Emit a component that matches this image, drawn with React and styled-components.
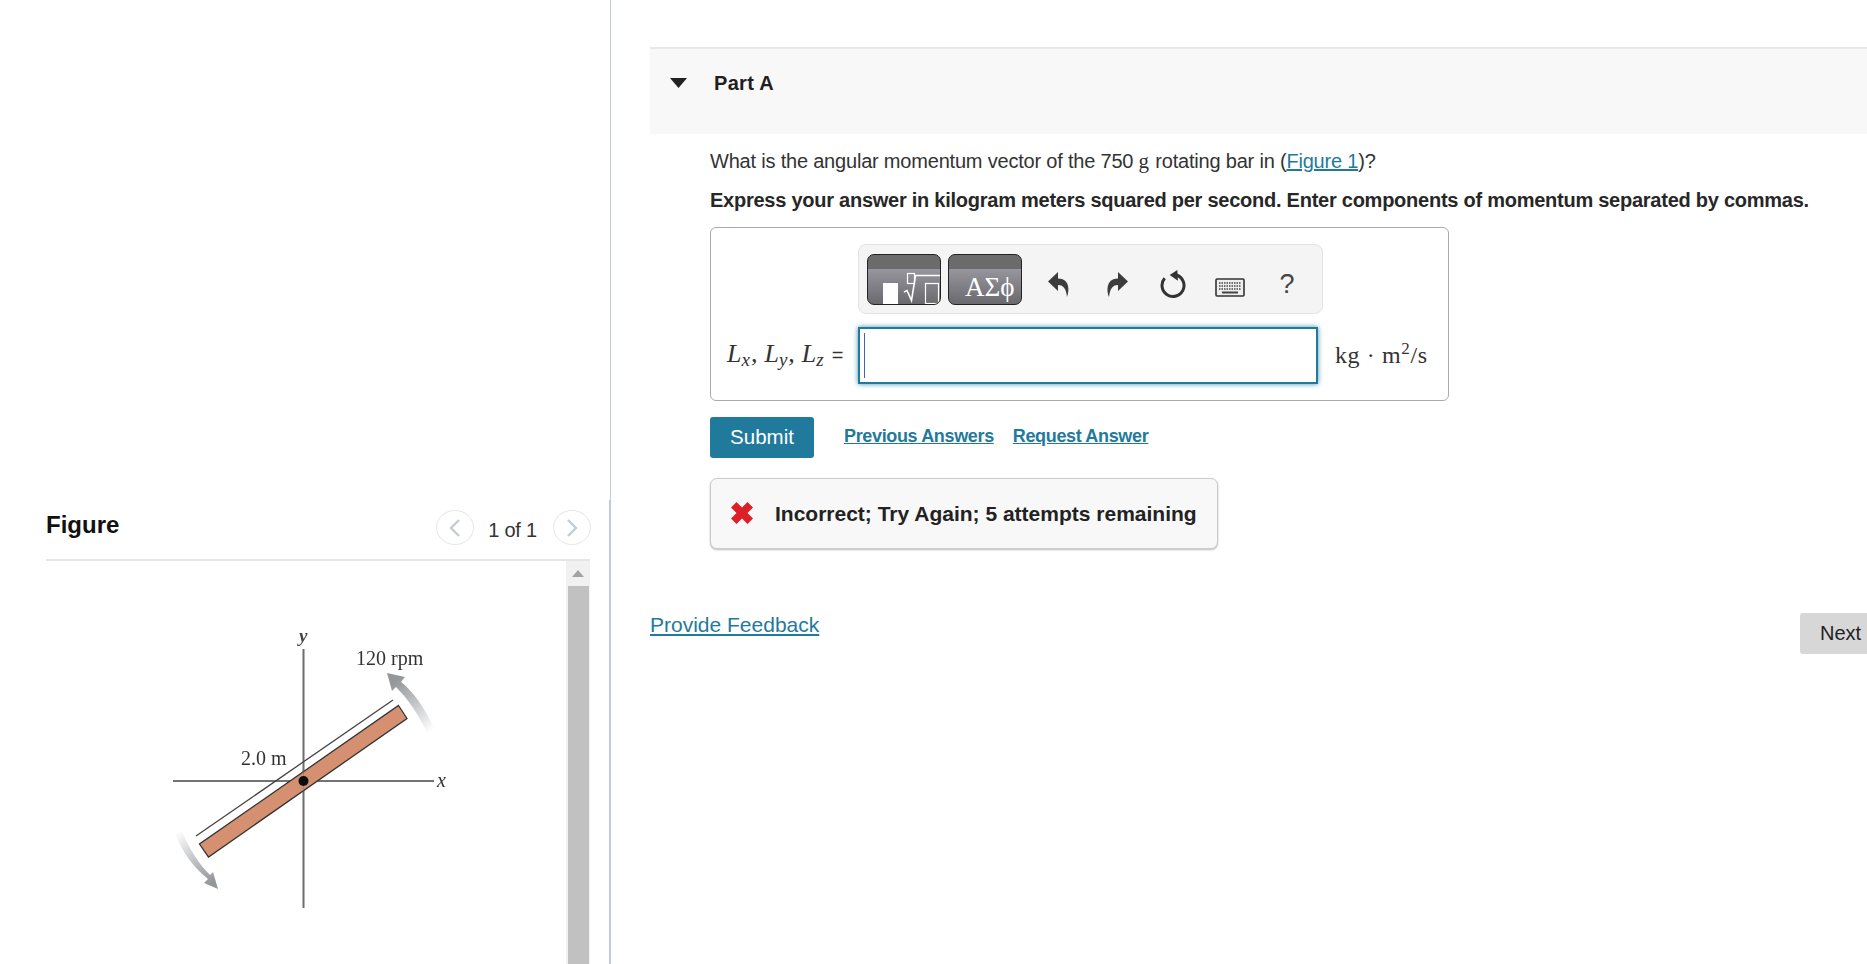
import React from "react";
import styled, { createGlobalStyle } from "styled-components";

const Global = createGlobalStyle`
  html, body { margin: 0; padding: 0; background: #fff; overflow: hidden; }
  body { font-family: "Liberation Sans", Arial, sans-serif; color: #272727; }
  * { box-sizing: border-box; }
`;
const Page = styled.div`display: flex; width: 1867px; height: 964px; overflow: hidden;`;
const LeftPane = styled.aside`
  width: 611px; flex: none; height: 964px; display: flex; flex-direction: column;
  padding: 500px 20px 0 46px; border-right: 1px solid #bccbdd; position: relative;
  &::after { content: ""; position: absolute; right: 0; top: 500px; bottom: 0; width: 1px; background: #bccbdd; }
`;
const FigHeader = styled.header`
  height: 61px; flex: none; display: flex; align-items: flex-start; justify-content: space-between;
  border-bottom: 2px solid #e5e5e5; padding-top: 9px;
`;
const FigTitle = styled.h2`margin: 0; font-size: 24px; line-height: 32px; font-weight: 700; color: #111;`;
const Pager = styled.div`display: flex; align-items: center; gap: 14px; margin-right: -1px; padding-top: 1px;`;
const RoundBtn = styled.button`
  width: 38px; height: 35px; border-radius: 50%; border: 1px solid #e8e8e8; background: #fff; padding: 0;
  display: flex; align-items: center; justify-content: center;
`;
const PagerText = styled.span`font-size: 20px; color: #333; margin: 6px 2px 0 0; letter-spacing: -0.2px;`;
const FigBody = styled.div`flex: 1; display: flex; min-height: 0;`;
const FigCanvas = styled.div`flex: 1; padding: 60px 0 0 104px;`;
const Scrollbar = styled.div`width: 24px; flex: none; background: #f1f1f1; display: flex; flex-direction: column; align-items: center;`;
const ScrollUp = styled.div`height: 25px; width: 100%; flex: none; display: flex; align-items: center; justify-content: center;`;
const ScrollThumb = styled.div`width: 21px; flex: 1; background: #c1c1c1;`;
const Diagram = styled.svg`display: block; width: 320px; height: 300px;`;

const RightPane = styled.main`flex: 1; min-width: 0; padding: 47px 0 0 39px; position: relative;`;
const PartHeader = styled.div`
  height: 87px; background: #f8f8f8; border-top: 2px solid #e8e8e8; display: flex; align-items: flex-start; padding: 20px 0 0 20px;
`;
const PartCaret = styled.svg`width: 17px; height: 10px; margin-top: 9px; flex: none;`;
const PartTitle = styled.h3`margin: 0 0 0 27px; font-size: 20px; line-height: 28px; font-weight: 700; color: #1f1f1f; letter-spacing: 0.3px;`;
const PartBody = styled.div`padding: 13px 0 0 60px;`;
const Question = styled.p`margin: 0; font-size: 20px; line-height: 28px; color: #333; letter-spacing: -0.2px;`;
const MathG = styled.span`font-family: "Liberation Serif", serif; font-size: 21px; margin-right: 1px;`;
const InlineLink = styled.a`color: #1f7a9c; text-decoration: underline;`;
const Instruction = styled.p`margin: 11px 0 0; font-size: 20px; line-height: 28px; font-weight: 700; color: #272727; letter-spacing: -0.25px;`;
const AnswerBox = styled.div`
  margin-top: 13px; width: 739px; height: 174px; border: 1px solid #aaa; border-radius: 6px;
  padding: 16px 0 0 17px; display: grid; grid-template-columns: 130px auto; grid-template-rows: 70px 58px; row-gap: 12px;
`;
const Toolbar = styled.div`
  grid-column: 2; width: 465px; height: 70px; background: #f4f4f4; border: 1px solid #e3e3e3; border-radius: 8px;
  display: flex; align-items: center; padding: 0 0 0 8px;
`;
const PaletteBtn = styled.div`
  width: 74px; height: 51px; border: 1px solid #222; border-radius: 7px; margin-right: 7px; flex: none; overflow: hidden; position: relative;
  background: linear-gradient(#6b6b6b 0 14px, #97969d 14px, #69696e 100%);
  font-family: "Liberation Serif", serif; color: #fff;
`;
const Greek = styled.span`position: absolute; left: 16px; bottom: 2px; font-size: 27px; line-height: 30px;`;
const ToolIcon = styled.div`
  width: ${p => p.$w}px; flex: none; display: flex; align-items: center; justify-content: center; margin-top: 10px;
  font-size: 27px; color: #444;
`;
const EqLabel = styled.div`
  font-family: "Liberation Serif", serif; font-style: italic; font-size: 26px; line-height: 56px; color: #333; white-space: nowrap;
  margin-left: -1px;
`;
const EqSub = styled.sub`font-size: 19px; line-height: 0; vertical-align: -4px; margin-right: 1px;`;
const EqComma = styled.span`margin-right: 7px;`;
const Equals = styled.span`font-family: "Liberation Sans", sans-serif; font-style: normal; font-size: 20px; margin-left: 7px;`;
const AnswerRow = styled.div`display: flex; align-items: center;`;
const AnswerInput = styled.div`
  width: 460px; height: 57px; border: 2px solid #1f7a9c; box-shadow: 0 0 5px #3f8fad; background: #fff; padding: 4px 0 0 4px; flex: none;
`;
const Caret = styled.div`width: 1px; height: 45px; background: #3a62c8;`;
const Unit = styled.div`
  margin-left: 17px; font-family: "Liberation Serif", serif; font-size: 24px; color: #333; white-space: nowrap; letter-spacing: 0.6px;
  sup { font-size: 17px; line-height: 0; }
`;
const Actions = styled.div`margin-top: 15px; display: flex; align-items: center; height: 42px;`;
const SubmitBtn = styled.button`
  width: 104px; height: 41px; background: #1f7a9c; color: #fff; border: 0; border-radius: 3px; font: 20.500px "Liberation Sans", sans-serif; padding: 0;
`;
const ActionLink = styled.a`font-size: 18px; font-weight: 700; color: #1f7a9c; text-decoration: underline; letter-spacing: -0.35px; margin-left: ${p => p.$gap}px; margin-top: -2px;`;
const Feedback = styled.div`
  margin-top: 20px; width: 508px; height: 71px; background: #f8f8f8; border: 1px solid #ccc; border-radius: 7px; box-shadow: 0 1px 2px #bbb;
  display: flex; align-items: center; padding-left: 20px; font-size: 21px; font-weight: 700; color: #222;
`;
const XIcon = styled.svg`width: 22px; height: 22px; flex: none; margin: -2px 22px 0 0;`;
const FooterRow = styled.div`margin-top: 64px; display: flex; justify-content: space-between; align-items: flex-start;`;
const FeedbackLink = styled.a`font-size: 21px; line-height: 24px; color: #1f7a9c; text-decoration: underline;`;
const NextBtn = styled.button`
  width: 67px; height: 41px; margin-top: 0; background: #d7d7d7; border: 0; border-radius: 3px 0 0 3px; color: #222; font: 20px "Liberation Sans", sans-serif; padding: 0 0 0 20px; text-align: left; white-space: nowrap;
`;

const Chevron = ({ dir }) => (
  <svg width="16" height="22" viewBox="0 0 16 22" fill="none" stroke="#c4ccd6" strokeWidth="2.4">
    <path d={dir === "left" ? "M12 3 4 11l8 8" : "M4 3l8 8-8 8"} />
  </svg>
);

const BarDiagram = () => (
  <Diagram viewBox="150 620 320 300">
    <defs>
      <linearGradient id="topArc" x1="435" y1="727" x2="395" y2="680" gradientUnits="userSpaceOnUse">
        <stop offset="0" stopColor="#fff" />
        <stop offset="0.55" stopColor="#bfc1c3" />
        <stop offset="1" stopColor="#94979a" />
      </linearGradient>
      <linearGradient id="botArc" x1="176" y1="832" x2="212" y2="882" gradientUnits="userSpaceOnUse">
        <stop offset="0" stopColor="#fff" />
        <stop offset="0.55" stopColor="#bfc1c3" />
        <stop offset="1" stopColor="#94979a" />
      </linearGradient>
      <filter id="soft"><feGaussianBlur stdDeviation="0.5" /></filter>
    </defs>
    <g filter="url(#soft)">
      <path d="M303.500 648V907" stroke="#6d6d6d" strokeWidth="2" fill="none" />
      <path d="M173 780H434" stroke="#444" strokeWidth="1.5" fill="none" />
      <path d="M398.500 704.500 407 717.500 208.500 856 199.500 843Z" fill="#d49070" stroke="#333" strokeWidth="1.3" />
      <path d="M303.500 722V820" stroke="#6d6d6d" strokeWidth="1" opacity="0.4" fill="none" />
      <path d="M196 835 393 699" stroke="#444" strokeWidth="1.3" fill="none" />
      <circle cx="303.500" cy="780" r="5" fill="#111" />
      <path d="M434 727C425 708 415 692 401 681L405 676 387 672 392 690 396 686C408 698 418 713 427 731Z" fill="url(#topArc)" />
      <path d="M175 833C183 852 194 867 208 878L204 882 218 888 213 871 210 874C200 864 190 850 182 830Z" fill="url(#botArc)" />
      <text x="356" y="664" fontFamily="Liberation Serif, serif" fontSize="20" fill="#333">120 rpm</text>
      <text x="241" y="764" fontFamily="Liberation Serif, serif" fontSize="20" fill="#333">2.0 m</text>
      <text x="299" y="641" fontFamily="Liberation Serif, serif" fontStyle="italic" fontWeight="700" fontSize="19" fill="#444">y</text>
      <text x="437" y="786" fontFamily="Liberation Serif, serif" fontStyle="italic" fontSize="20" fill="#333">x</text>
    </g>
  </Diagram>
);

const TemplatesGlyph = () => (
  <svg width="72" height="50" viewBox="0 0 72 50" style={{ position: "absolute", left: 0, top: 0 }} fill="none" stroke="#fff" strokeWidth="1.200">
    <rect x="15" y="28" width="15" height="22" fill="#fff" stroke="none" />
    <rect x="39.500" y="18.500" width="7" height="10" />
    <path d="M36 37l3-1.500 4.500 10L47.500 20.500H72" strokeWidth="1.600" />
    <rect x="57.500" y="28.500" width="13" height="20" />
  </svg>
);
const Undo = () => (
  <svg width="22" height="25" viewBox="0 0 22 25">
    <path d="M10 0 0 9.500 10 19v-6c5 0 8 3 9 12 2.500-6 3-18.500-9-18.500Z" fill="#3c3c3c" />
  </svg>
);
const Redo = () => (
  <svg width="22" height="25" viewBox="0 0 22 25">
    <path d="M12 0l10 9.500L12 19v-6c-5 0-8 3-9 12C.500 19 0 6.500 12 6.500Z" fill="#3c3c3c" />
  </svg>
);
const Reset = () => (
  <svg width="30" height="30" viewBox="0 0 90 90" fill="none">
    <path d="M17 28A33 33 0 1 0 52 18" stroke="#333" strokeWidth="9" />
    <path d="M55 3 32 18 57 35Z" fill="#333" />
  </svg>
);
const Keyboard = () => (
  <svg width="30" height="25" viewBox="0 -6 30 25">
    <rect x="1" y="1" width="28" height="17" rx="1" fill="#eee" stroke="#333" strokeWidth="1.600" />
    <path d="M4 5h22M4 8h22M4 11h22" stroke="#444" strokeWidth="1.600" strokeDasharray="1.500 1" />
    <path d="M7 14.500h16" stroke="#444" strokeWidth="2" />
  </svg>
);

export default function App() {
  return (
    <Page>
      <Global />
      <LeftPane>
        <FigHeader>
          <FigTitle>Figure</FigTitle>
          <Pager>
            <RoundBtn aria-label="Previous"><Chevron dir="left" /></RoundBtn>
            <PagerText>1 of 1</PagerText>
            <RoundBtn aria-label="Next"><Chevron dir="right" /></RoundBtn>
          </Pager>
        </FigHeader>
        <FigBody>
          <FigCanvas><BarDiagram /></FigCanvas>
          <Scrollbar>
            <ScrollUp>
              <svg width="12" height="7" viewBox="0 0 12 7"><path d="M6 0l6 7H0Z" fill="#a3a3a3" /></svg>
            </ScrollUp>
            <ScrollThumb />
          </Scrollbar>
        </FigBody>
      </LeftPane>
      <RightPane>
        <PartHeader>
          <PartCaret viewBox="0 0 17 10"><path d="M0 0h17L8.500 10Z" fill="#222" /></PartCaret>
          <PartTitle>Part A</PartTitle>
        </PartHeader>
        <PartBody>
          <Question>
            What is the angular momentum vector of the 750 <MathG>g</MathG> rotating bar in (<InlineLink>Figure 1</InlineLink>)?
          </Question>
          <Instruction>Express your answer in kilogram meters squared per second. Enter components of momentum separated by commas.</Instruction>
          <AnswerBox>
            <Toolbar>
              <PaletteBtn><TemplatesGlyph /></PaletteBtn>
              <PaletteBtn><Greek>ΑΣϕ</Greek></PaletteBtn>
              <ToolIcon $w={59}><Undo /></ToolIcon>
              <ToolIcon $w={58}><Redo /></ToolIcon>
              <ToolIcon $w={55}><Reset /></ToolIcon>
              <ToolIcon $w={58}><Keyboard /></ToolIcon>
              <ToolIcon $w={56}>?</ToolIcon>
            </Toolbar>
            <EqLabel>
              L<EqSub>x</EqSub><EqComma>,</EqComma>L<EqSub>y</EqSub><EqComma>,</EqComma>L<EqSub>z</EqSub><Equals>=</Equals>
            </EqLabel>
            <AnswerRow>
              <AnswerInput><Caret /></AnswerInput>
              <Unit>kg · m<sup>2</sup>/s</Unit>
            </AnswerRow>
          </AnswerBox>
          <Actions>
            <SubmitBtn>Submit</SubmitBtn>
            <ActionLink $gap={30}>Previous Answers</ActionLink>
            <ActionLink $gap={19}>Request Answer</ActionLink>
          </Actions>
          <Feedback>
            <XIcon viewBox="0 0 22 22"><path d="M0 5.500 5.500 0 11 5.500 16.500 0 22 5.500 16.500 11 22 16.500 16.500 22 11 16.500 5.500 22 0 16.500 5.500 11Z" fill="#dc2027" /></XIcon>
            Incorrect; Try Again; 5 attempts remaining
          </Feedback>
        </PartBody>
        <FooterRow>
          <FeedbackLink>Provide Feedback</FeedbackLink>
          <NextBtn>Next</NextBtn>
        </FooterRow>
      </RightPane>
    </Page>
  );
}
